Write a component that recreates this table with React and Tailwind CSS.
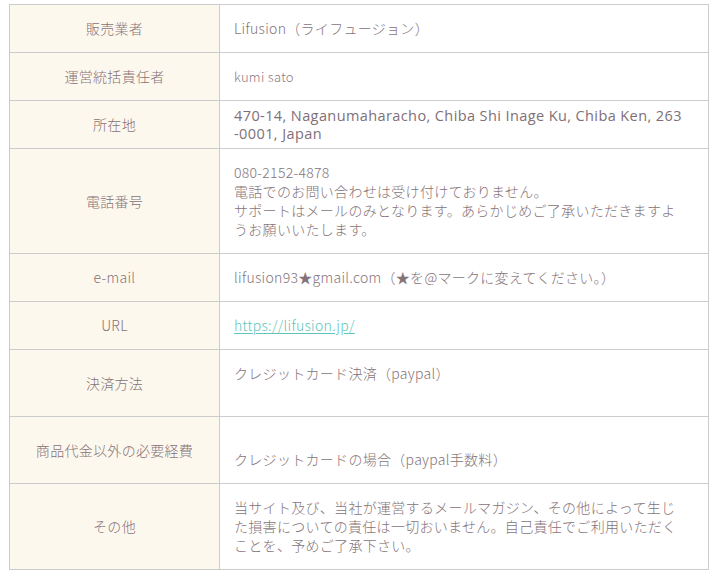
const rows = [
  { label: "販売業者", h: "h-[47px]", body: ["Lifusion（ライフュージョン）"] },
  { label: "運営統括責任者", h: "h-[47px]", body: ["kumi sato"], small: true },
  { label: "所在地", h: "h-[47px]", address: true },
  {
    label: "電話番号",
    h: "h-[104px]",
    body: [
      "080-2152-4878",
      "電話でのお問い合わせは受け付けておりません。",
      "サポートはメールのみとなります。あらかじめご了承いただきますよ",
      "うお願いいたします。",
    ],
  },
  {
    label: "e-mail",
    h: "h-[47px]",
    body: ["lifusion93★gmail.com（★を@マークに変えてください。）"],
  },
  { label: "URL", h: "h-[47px]", link: "https://lifusion.jp/" },
  { label: "決済方法", h: "h-[66px]", body: ["クレジットカード決済（paypal）", ""] },
  {
    label: "商品代金以外の必要経費",
    h: "h-[66px]",
    body: ["", "クレジットカードの場合（paypal手数料）"],
  },
  {
    label: "その他",
    h: "h-[85px]",
    body: [
      "当サイト及び、当社が運営するメールマガジン、その他によって生じ",
      "た損害についての責任は一切おいません。自己責任でご利用いただく",
      "ことを、予めご了承下さい。",
    ],
  },
];

const jp = "font-['Noto_Sans_CJK_JP',sans-serif]";

export default function App() {
  return (
    <div className="w-[718px] h-[578px] bg-white pt-[4px] pl-[9px]">
      <div
        className={`w-[700px] border-l border-t border-[#cccccc] text-[14px] font-light tracking-[0.3px] text-[#857378] ${jp}`}
      >
        {rows.map((row) => (
          <div key={row.label} className="flex border-b border-[#cccccc]">
            {/* label cell */}
            <div
              className={`${row.h} w-[210px] shrink-0 bg-[#fdf8ee] border-r border-[#cccccc] flex items-center justify-center leading-[19px]`}
            >
              {row.label}
            </div>
            {/* value cell */}
            <div
              className={`${row.h} flex-1 border-r border-[#cccccc] flex flex-col justify-center pl-[14px] leading-[19px]`}
            >
              {row.address ? (
                <div className="font-['Open_Sans',sans-serif] font-normal text-[14.5px] tracking-[0.4px] leading-[18px] text-[#7f6f78] whitespace-nowrap">
                  <div>470-14, Naganumaharacho, Chiba Shi Inage Ku, Chiba Ken, 263</div>
                  <div>-0001, Japan</div>
                </div>
              ) : row.link ? (
                <a href="#" className="text-[#5fc4bb] underline underline-offset-2">
                  {row.link}
                </a>
              ) : (
                row.body.map((line, i) => (
                  <div
                    key={i}
                    className={`h-[19px] whitespace-nowrap ${row.small ? "text-[13px] text-[#8a7a7e]" : ""}`}
                  >
                    {line}
                  </div>
                ))
              )}
            </div>
          </div>
        ))}
      </div>
    </div>
  );
}
